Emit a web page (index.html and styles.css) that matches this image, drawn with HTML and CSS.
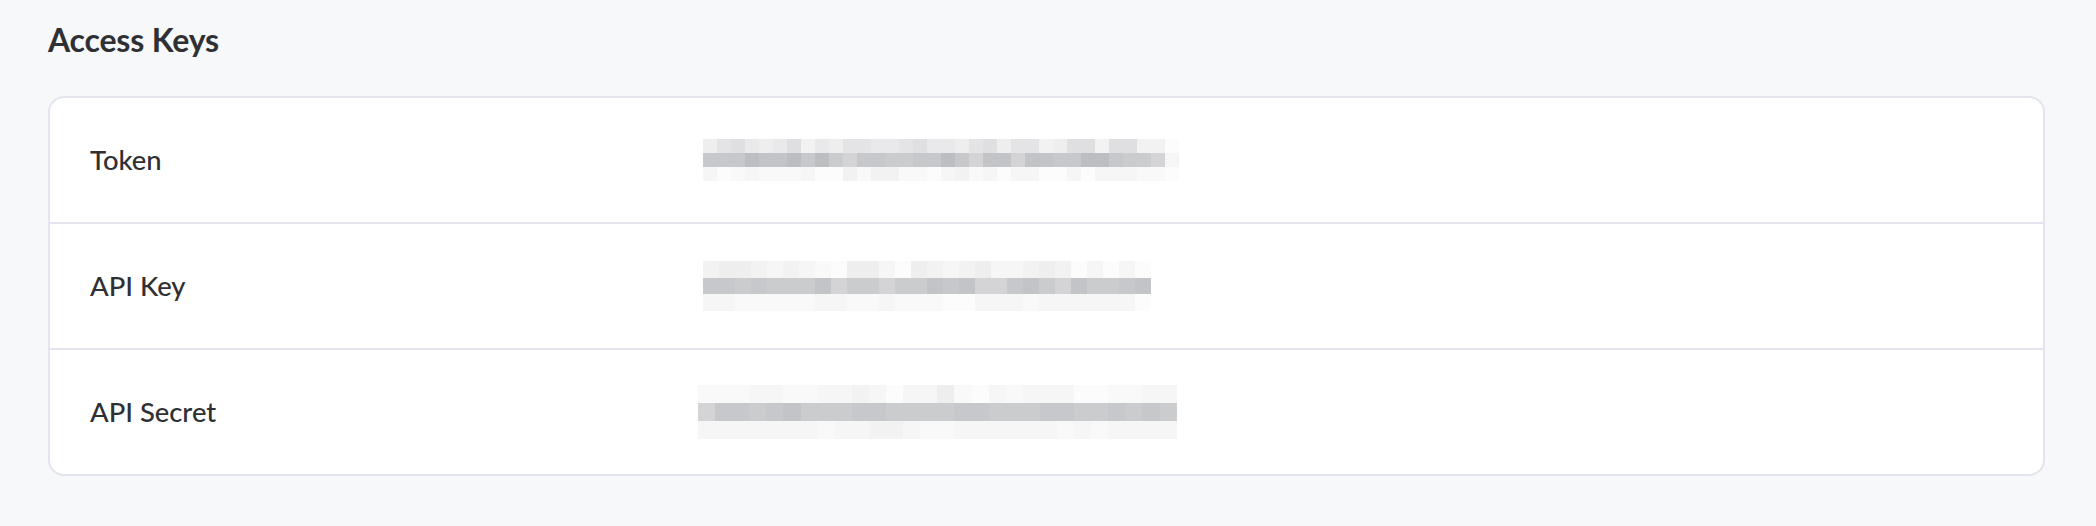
FILE: index.html
```html
<!DOCTYPE html>
<html lang="en">
<head>
<meta charset="utf-8">
<title>Access Keys</title>
<link rel="stylesheet" href="styles.css">
</head>
<body>
<main class="page">
  <h2 class="title">Access Keys</h2>
  <section class="card">
    <div class="row">
      <div class="label">Token</div>
      <div class="value">
        <div class="mosaic mosaic-token">
          <i class="a4"></i><i class="a6"></i><i class="a7"></i><i class="a5"></i><i class="a4"></i><i class="a5"></i><i class="a7"></i><i class="a3"></i><i class="a5"></i><i class="a4"></i><i class="a6"></i><i class="a6"></i><i class="a5"></i><i class="a5"></i><i class="a6"></i><i class="a7"></i><i class="a5"></i><i class="a5"></i><i class="a4"></i><i class="a6"></i><i class="a7"></i><i class="a4"></i><i class="a6"></i><i class="a6"></i><i class="a3"></i><i class="a4"></i><i class="a7"></i><i class="a7"></i><i class="a3"></i><i class="a7"></i><i class="a7"></i><i class="a3"></i><i class="a3"></i><i class="a0"></i>
          <i class="d2"></i><i class="d2"></i><i class="d2"></i><i class="d4"></i><i class="d3"></i><i class="d3"></i><i class="d4"></i><i class="d2"></i><i class="d4"></i><i class="d1"></i><i class="d0"></i><i class="d2"></i><i class="d2"></i><i class="d1"></i><i class="d1"></i><i class="d2"></i><i class="d2"></i><i class="d4"></i><i class="d2"></i><i class="d0"></i><i class="d3"></i><i class="d3"></i><i class="d0"></i><i class="d3"></i><i class="d3"></i><i class="d2"></i><i class="d2"></i><i class="d4"></i><i class="d4"></i><i class="d2"></i><i class="d1"></i><i class="d1"></i><i class="d0"></i><i class="a2"></i>
          <i class="a2"></i><i class="a0"></i><i class="a1"></i><i class="a2"></i><i class="a1"></i><i class="a1"></i><i class="a1"></i><i class="a2"></i><i class="a0"></i><i class="a0"></i><i class="a3"></i><i class="a1"></i><i class="a3"></i><i class="a3"></i><i class="a1"></i><i class="a1"></i><i class="a0"></i><i class="a2"></i><i class="a3"></i><i class="a1"></i><i class="a2"></i><i class="a0"></i><i class="a2"></i><i class="a2"></i><i class="a0"></i><i class="a0"></i><i class="a2"></i><i class="a0"></i><i class="a2"></i><i class="a2"></i><i class="a2"></i><i class="a1"></i><i class="a1"></i><i class="a0"></i>
        </div>
      </div>
    </div>
    <div class="row">
      <div class="label">API Key</div>
      <div class="value">
        <div class="mosaic mosaic-key">
          <i class="a3"></i><i class="a4"></i><i class="a4"></i><i class="a3"></i><i class="a2"></i><i class="a3"></i><i class="a2"></i><i class="a1"></i><i class="a0"></i><i class="a4"></i><i class="a4"></i><i class="a2"></i><i class="a0"></i><i class="a4"></i><i class="a3"></i><i class="a2"></i><i class="a3"></i><i class="a4"></i><i class="a2"></i><i class="a2"></i><i class="a3"></i><i class="a4"></i><i class="a3"></i><i class="a0"></i><i class="a2"></i><i class="a0"></i><i class="a2"></i><i class="a0"></i>
          <i class="d2"></i><i class="d2"></i><i class="d1"></i><i class="d2"></i><i class="d1"></i><i class="d1"></i><i class="d1"></i><i class="d3"></i><i class="d0"></i><i class="d1"></i><i class="d1"></i><i class="d0"></i><i class="d1"></i><i class="d1"></i><i class="d3"></i><i class="d2"></i><i class="d3"></i><i class="d0"></i><i class="d0"></i><i class="d2"></i><i class="d3"></i><i class="d1"></i><i class="d0"></i><i class="d3"></i><i class="d1"></i><i class="d1"></i><i class="d2"></i><i class="d3"></i>
          <i class="a2"></i><i class="a2"></i><i class="a1"></i><i class="a1"></i><i class="a1"></i><i class="a1"></i><i class="a1"></i><i class="a2"></i><i class="a2"></i><i class="a1"></i><i class="a1"></i><i class="a2"></i><i class="a1"></i><i class="a1"></i><i class="a1"></i><i class="a0"></i><i class="a0"></i><i class="a2"></i><i class="a2"></i><i class="a2"></i><i class="a1"></i><i class="a2"></i><i class="a2"></i><i class="a2"></i><i class="a2"></i><i class="a2"></i><i class="a2"></i><i class="a0"></i>
        </div>
      </div>
    </div>
    <div class="row">
      <div class="label">API Secret</div>
      <div class="value">
        <div class="mosaic mosaic-secret">
          <i class="a1"></i><i class="a1"></i><i class="a1"></i><i class="a2"></i><i class="a2"></i><i class="a1"></i><i class="a1"></i><i class="a2"></i><i class="a2"></i><i class="a3"></i><i class="a2"></i><i class="a0"></i><i class="a2"></i><i class="a2"></i><i class="a4"></i><i class="a1"></i><i class="a0"></i><i class="a2"></i><i class="a1"></i><i class="a2"></i><i class="a2"></i><i class="a2"></i><i class="a0"></i><i class="a0"></i><i class="a1"></i><i class="a1"></i><i class="a2"></i><i class="a2"></i>
          <i class="d0"></i><i class="d2"></i><i class="d2"></i><i class="d1"></i><i class="d2"></i><i class="d3"></i><i class="d1"></i><i class="d1"></i><i class="d1"></i><i class="d2"></i><i class="d2"></i><i class="d1"></i><i class="d1"></i><i class="d1"></i><i class="d1"></i><i class="d2"></i><i class="d2"></i><i class="d1"></i><i class="d1"></i><i class="d1"></i><i class="d2"></i><i class="d2"></i><i class="d1"></i><i class="d1"></i><i class="d2"></i><i class="d1"></i><i class="d2"></i><i class="d1"></i>
          <i class="a2"></i><i class="a2"></i><i class="a2"></i><i class="a2"></i><i class="a2"></i><i class="a2"></i><i class="a2"></i><i class="a1"></i><i class="a2"></i><i class="a2"></i><i class="a3"></i><i class="a3"></i><i class="a2"></i><i class="a1"></i><i class="a1"></i><i class="a2"></i><i class="a2"></i><i class="a2"></i><i class="a2"></i><i class="a2"></i><i class="a2"></i><i class="a1"></i><i class="a2"></i><i class="a1"></i><i class="a2"></i><i class="a2"></i><i class="a2"></i><i class="a2"></i>
        </div>
      </div>
    </div>
  </section>
</main>
</body>
</html>
```
FILE: styles.css
```css
html, body {
  margin: 0;
  padding: 0;
  background: #f7f8fa;
}

body {
  font-family: "Lato", "Inter", "Liberation Sans", sans-serif;
  color: #323337;
}

.page {
  padding: 20px 51px 0 48px;
}

.title {
  margin: 0 0 36px 0;
  font-size: 32px;
  line-height: 40px;
  font-weight: 700;
  color: #2f3034;
  letter-spacing: -0.2px;
}

.card {
  background: #ffffff;
  border: 2px solid #e3e4ed;
  border-radius: 16px;
  overflow: hidden;
}

.row {
  display: grid;
  grid-template-columns: 613px 1fr;
  align-items: center;
  height: 124px;
  padding: 0 40px;
}

.row + .row {
  border-top: 2px solid #e3e4ed;
}

.label {
  font-size: 27.4px;
  line-height: 32px;
  font-weight: 500;
  color: #2f3034;
}

.value {
  display: flex;
  align-items: center;
}

.mosaic {
  display: grid;
}

.mosaic i {
  display: block;
}

.mosaic-token {
  grid-template-columns: repeat(34, 14px);
  grid-auto-rows: 14.3px;
}

.mosaic-key {
  grid-template-columns: repeat(28, 16px);
  grid-auto-rows: 16.6px;
}

.mosaic-secret {
  margin-left: -5px;
  grid-template-columns: repeat(28, 17.1px);
  grid-auto-rows: 17.7px;
}

.a0 { background: #fcfcfc; }
.a1 { background: #f9f9f9; }
.a2 { background: #f6f6f7; }
.a3 { background: #f2f2f3; }
.a4 { background: #eeeeef; }
.a5 { background: #e9e9eb; }
.a6 { background: #e4e4e6; }
.a7 { background: #dfdfe1; }
.d0 { background: #d4d4d6; }
.d1 { background: #cbccce; }
.d2 { background: #c7c8cb; }
.d3 { background: #c3c4c8; }
.d4 { background: #bdbec2; }
```
